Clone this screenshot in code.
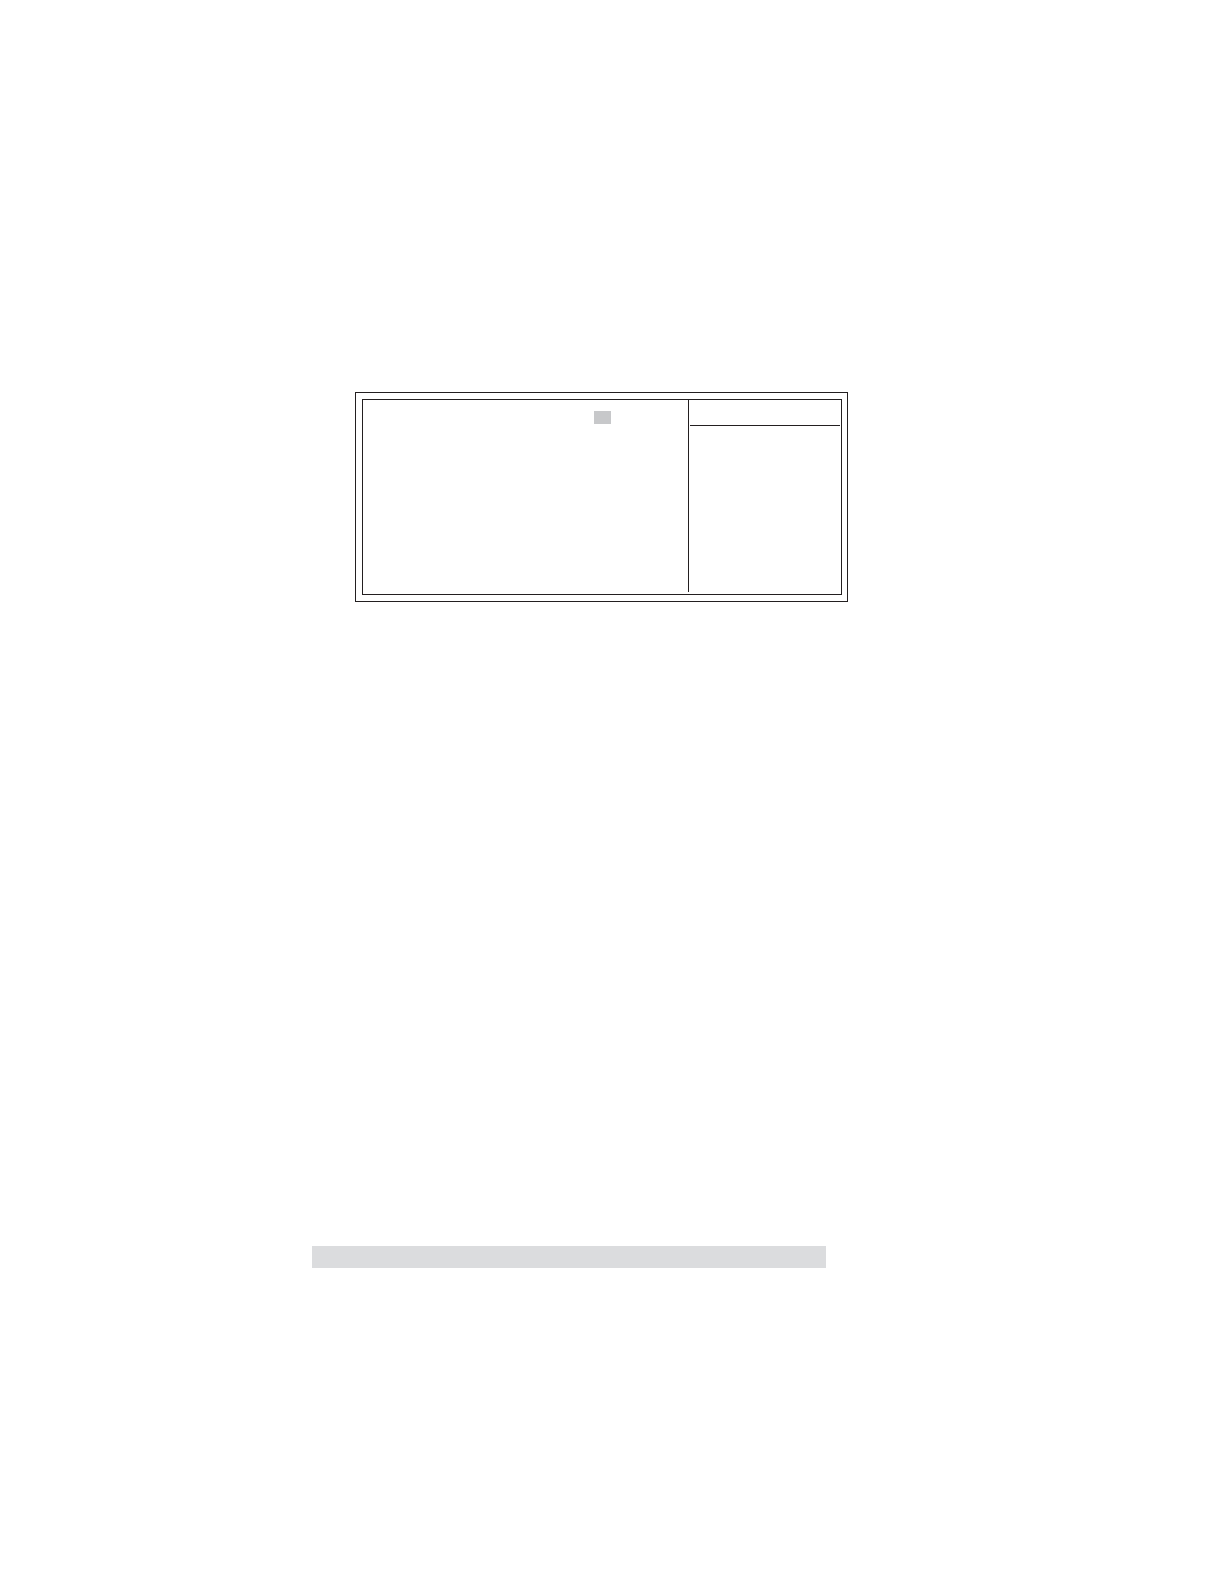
<main class="page">
  <section class="frame">
    <div class="panel">
      <div class="settings">
        <div class="selection"></div>
      </div>
      <aside class="help">
        <div class="help-title"></div>
      </aside>
    </div>
  </section>
  <footer class="footer"></footer>
</main>

<style>
  :global(body) {
    margin: 0;
    background: #fff;
    font-family: "Liberation Sans", sans-serif;
  }

  .page {
    --line: #231f20;
    display: grid;
    grid-template-columns: 312fr 43fr 471fr 22fr 376fr;
    row-gap: 644px;
    padding: 392px 0 316px;
  }

  .frame,
  .panel {
    box-sizing: border-box;
    border: 1px solid var(--line);
  }

  .frame {
    grid-column: 3 / 5;
    padding: 6px 5px 6px 6px;
  }

  .panel {
    display: grid;
    grid-template-columns: 325fr 153fr;
    min-height: 196px;
    padding-bottom: 2px;
  }

  .settings {
    display: flex;
    justify-content: flex-end;
    align-items: flex-start;
    padding: 11px 77px 0 0;
  }

  .selection {
    width: 17px;
    height: 13px;
    background: #c7c8ca;
  }

  .help {
    padding: 0 1px;
    border-left: 1px solid var(--line);
  }

  .help-title {
    height: 25px;
    border-bottom: 1px solid var(--line);
  }

  .footer {
    grid-column: 2 / 4;
    height: 22px;
    background: #dbdcde;
  }
</style>
